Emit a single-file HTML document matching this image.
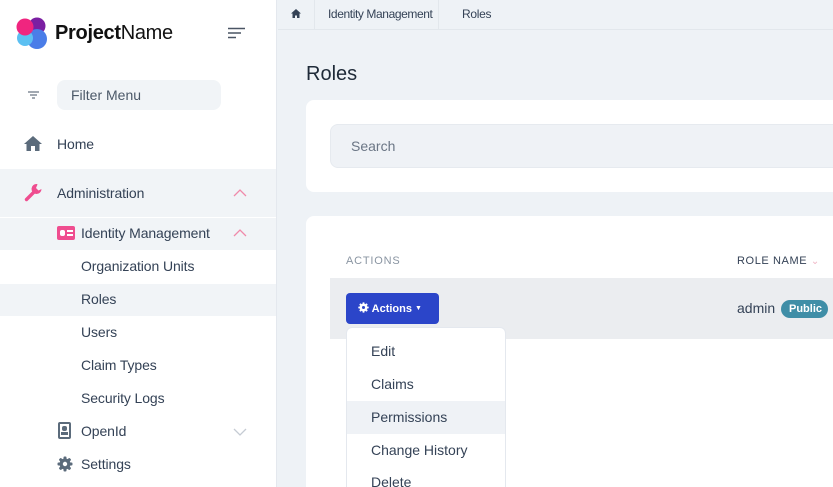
<!DOCTYPE html>
<html><head><meta charset="utf-8"><style>
*{box-sizing:border-box;margin:0;padding:0}
html,body{width:833px;height:487px;overflow:hidden}
body{font-family:"Liberation Sans",sans-serif;background:#eef2f6;position:relative;color:#2b3a4a}
.sb{position:absolute;left:0;top:0;width:277px;height:487px;background:#fff;border-right:1px solid #e4e8ee}
.abs{position:absolute}
.item{position:absolute;left:0;width:276px;font-size:14px;color:#344256;letter-spacing:-0.1px}
.main{position:absolute;left:278px;top:0;right:0;bottom:0;overflow:hidden}
</style></head><body>
<div class="sb">
  <svg class="abs" style="left:16px;top:17px" width="32" height="33" viewBox="0 0 32 33">
    <circle cx="21" cy="9" r="8.5" fill="#7b1fa2"/>
    <circle cx="21" cy="22" r="10" fill="#4a7de8"/>
    <circle cx="9" cy="21" r="8" fill="#5cc0f2"/>
    <circle cx="9" cy="10" r="8.5" fill="#f0257f"/>
  </svg>
  <div class="abs" style="left:55px;top:22px;font-size:20px;color:#111;letter-spacing:-0.3px"><b>Project</b>Name</div>
  <svg class="abs" style="left:228px;top:27px" width="17" height="12"><path d="M0 1.5H17M0 6H13M0 10.5H8" stroke="#4a5564" stroke-width="1.6"/></svg>
  <svg class="abs" style="left:28px;top:91px" width="11" height="8"><path d="M0 1H11M2 4H9M4 7H7" stroke="#6b7685" stroke-width="1.2"/></svg>
  <div class="abs" style="left:57px;top:80px;width:164px;height:30px;background:#f1f4f7;border-radius:8px;font-size:14px;color:#4b5868;padding:7px 0 0 14px">Filter Menu</div>
  <svg class="abs" style="left:24px;top:136px" width="18" height="15" viewBox="0 0 18 15"><path d="M9 0L0 8H2.5V15H7V10H11V15H15.5V8H18Z" fill="#5b6b7b"/></svg>
  <div class="item" style="top:136px;padding-left:57px">Home</div>
  <div class="abs" style="left:0;top:169px;width:276px;height:48px;background:#f1f4f7"></div>
  <svg class="abs" style="left:24px;top:183px" width="18" height="19" viewBox="0 0 18 19"><path d="M2.5 16.5L10 9" stroke="#ef4d8f" stroke-width="3.4" stroke-linecap="round"/><path d="M13 1A5 5 0 1 0 17.5 6L14.5 7.5 12 5 13.5 1.5Z" fill="#ef4d8f"/></svg>
  <div class="item" style="top:185px;padding-left:57px">Administration</div>
  <svg class="abs" style="left:233px;top:189px" width="14" height="8"><path d="M1 7L7 1 13 7" stroke="#f08aaa" stroke-width="1.3" fill="none"/></svg>
  <div class="abs" style="left:0;top:218px;width:276px;height:32px;background:#f1f4f7"></div>
  <div class="abs" style="left:57px;top:226px;width:18px;height:14px;background:#ef4d8f;border-radius:2px"></div>
  <div class="abs" style="left:60px;top:230px;width:5px;height:6px;background:#fff;border-radius:2px"></div>
  <div class="abs" style="left:67px;top:230px;width:6px;height:1.5px;background:#fff"></div>
  <div class="abs" style="left:67px;top:234px;width:6px;height:1.5px;background:#fff"></div>
  <div class="item" style="top:225px;padding-left:81px">Identity Management</div>
  <svg class="abs" style="left:233px;top:229px" width="14" height="8"><path d="M1 7L7 1 13 7" stroke="#f08aaa" stroke-width="1.3" fill="none"/></svg>
  <div class="item" style="top:258px;padding-left:81px">Organization Units</div>
  <div class="abs" style="left:0;top:284px;width:276px;height:32px;background:#f1f4f7"></div>
  <div class="item" style="top:291px;padding-left:81px">Roles</div>
  <div class="item" style="top:324px;padding-left:81px">Users</div>
  <div class="item" style="top:357px;padding-left:81px">Claim Types</div>
  <div class="item" style="top:390px;padding-left:81px">Security Logs</div>
  <div class="abs" style="left:58px;top:422px;width:13px;height:17px;border:2px solid #5b6b7b;border-radius:2px"></div>
  <div class="abs" style="left:62px;top:426px;width:5px;height:5px;background:#5b6b7b;border-radius:2px"></div>
  <div class="abs" style="left:61px;top:432px;width:7px;height:3px;background:#5b6b7b"></div>
  <div class="item" style="top:423px;padding-left:81px">OpenId</div>
  <svg class="abs" style="left:233px;top:428px" width="14" height="8"><path d="M1 1L7 7 13 1" stroke="#c5cbd3" stroke-width="1.3" fill="none"/></svg>
  <svg class="abs" style="left:57px;top:456px" width="16" height="16" viewBox="0 0 16 16"><g fill="#5b6b7b"><circle cx="8" cy="8" r="5.5"/><rect x="6.5" y="0.5" width="3" height="15" rx="1"/><rect x="0.5" y="6.5" width="15" height="3" rx="1"/><rect x="6.5" y="0.5" width="3" height="15" rx="1" transform="rotate(45 8 8)"/><rect x="6.5" y="0.5" width="3" height="15" rx="1" transform="rotate(-45 8 8)"/></g><circle cx="8" cy="8" r="2.2" fill="#fff"/></svg>
  <div class="item" style="top:456px;padding-left:81px">Settings</div>
</div>
<div class="main">
  <div class="abs" style="left:0;top:0;width:555px;height:30px;border-bottom:1px solid #e2e7ec"></div>
  <svg class="abs" style="left:13px;top:9px" width="10" height="9" viewBox="0 0 10 9"><path d="M5 0L0 4.5H1.5V9H4V6.5H6V9H8.5V4.5H10Z" fill="#344256"/></svg>
  <div class="abs" style="left:36px;top:0;width:1px;height:29px;background:#e2e7ec"></div>
  <div class="abs" style="left:50px;top:7px;font-size:12px;color:#344256;letter-spacing:-0.4px">Identity Management</div>
  <div class="abs" style="left:160px;top:0;width:1px;height:29px;background:#e2e7ec"></div>
  <div class="abs" style="left:184px;top:7px;font-size:12px;color:#344256;letter-spacing:-0.3px">Roles</div>
  <div class="abs" style="left:28px;top:63px;font-size:20px;color:#1e2a38">Roles</div>
  <div class="abs" style="left:28px;top:100px;width:540px;height:92px;background:#fff;border-radius:8px"></div>
  <div class="abs" style="left:52px;top:124px;width:520px;height:44px;background:#eff2f6;border:1px solid #e6eaef;border-radius:8px;font-size:14px;color:#6b7685;padding:13px 0 0 20px">Search</div>
  <div class="abs" style="left:28px;top:216px;width:540px;height:290px;background:#fff;border-radius:8px"></div>
  <div class="abs" style="left:68px;top:255px;font-size:11px;letter-spacing:0.8px;color:#8a95a2">ACTIONS</div>
  <div class="abs" style="left:459px;top:255px;font-size:11px;letter-spacing:0.6px;color:#344256">ROLE NAME <span style="color:#f0b5c5;font-size:10px">⌄</span></div>
  <div class="abs" style="left:52px;top:278px;width:510px;height:61px;background:#ebedf0"></div>
  <div class="abs" style="left:68px;top:293px;width:93px;height:31px;background:#2b45c9;border-radius:4px;color:#fff;font-size:11px;font-weight:bold;padding:9px 0 0 12px">
    <svg width="11" height="11" viewBox="0 0 16 16" style="vertical-align:-1px"><g fill="#fff"><circle cx="8" cy="8" r="5.5"/><rect x="6.5" y="0.5" width="3" height="15" rx="1"/><rect x="0.5" y="6.5" width="15" height="3" rx="1"/><rect x="6.5" y="0.5" width="3" height="15" rx="1" transform="rotate(45 8 8)"/><rect x="6.5" y="0.5" width="3" height="15" rx="1" transform="rotate(-45 8 8)"/></g><circle cx="8" cy="8" r="2.2" fill="#2b45c9"/></svg>
    Actions <span style="font-size:7px;vertical-align:2px">▼</span></div>
  <div class="abs" style="left:459px;top:300px;font-size:14px;color:#344256">admin</div>
  <div class="abs" style="left:503px;top:300px;width:47px;height:18px;background:#3f8ea7;border-radius:9px;color:#fff;font-size:11px;font-weight:bold;padding:3px 0 0 8px">Public</div>
  <div class="abs" style="left:68px;top:327px;width:160px;height:180px;background:#fff;border:1px solid #e4e8ee;border-radius:6px"></div>
  <div class="abs" style="left:69px;top:401px;width:158px;height:33px;background:#eff2f6"></div>
  <div class="abs" style="left:93px;top:343px;font-size:14px;color:#344256">Edit</div>
  <div class="abs" style="left:93px;top:376px;font-size:14px;color:#344256">Claims</div>
  <div class="abs" style="left:93px;top:409px;font-size:14px;color:#344256">Permissions</div>
  <div class="abs" style="left:93px;top:442px;font-size:14px;color:#344256">Change History</div>
  <div class="abs" style="left:93px;top:474px;font-size:14px;color:#344256">Delete</div>
</div>
</body></html>
